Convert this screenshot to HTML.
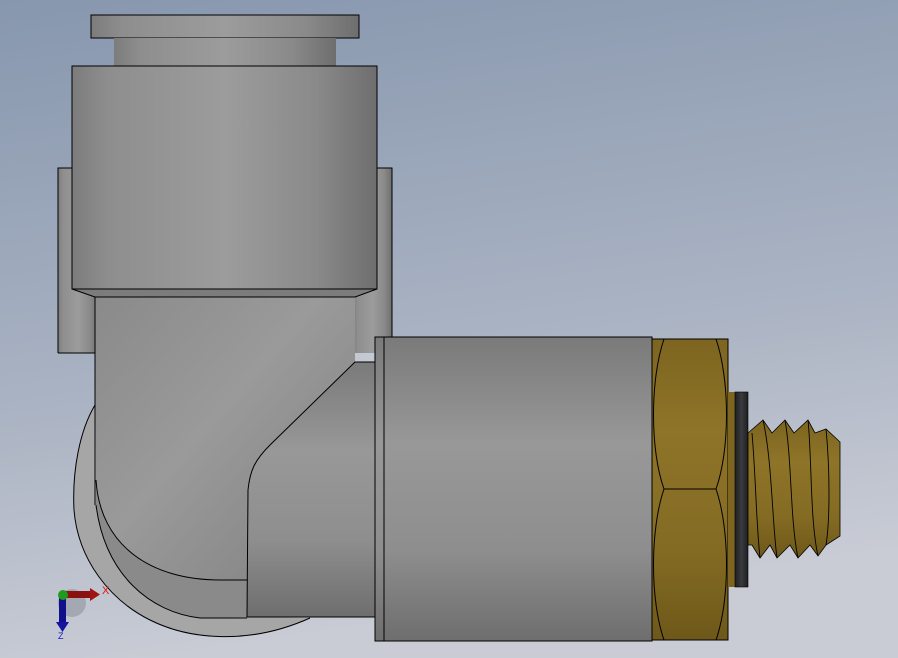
<!DOCTYPE html>
<html><head><meta charset="utf-8"><style>
html,body{margin:0;padding:0;width:898px;height:658px;overflow:hidden}
svg{display:block}
</style></head><body>
<svg width="898" height="658" viewBox="0 0 898 658" xmlns="http://www.w3.org/2000/svg">
<defs>
<linearGradient id="bg" x1="0" y1="0" x2="0.2" y2="1">
<stop offset="0" stop-color="#8797ae"/><stop offset="0.6" stop-color="#aab3c3"/><stop offset="1" stop-color="#c9ccd5"/>
</linearGradient>
<linearGradient id="cylV" x1="0" y1="0" x2="1" y2="0">
<stop offset="0" stop-color="#7c7c7c"/><stop offset="0.12" stop-color="#8e8e8e"/><stop offset="0.5" stop-color="#9c9c9c"/><stop offset="0.8" stop-color="#8a8a8a"/><stop offset="1" stop-color="#6e6e6e"/>
</linearGradient>
<linearGradient id="cylH" x1="0" y1="0" x2="0" y2="1">
<stop offset="0" stop-color="#7a7a7a"/><stop offset="0.35" stop-color="#989898"/><stop offset="0.7" stop-color="#8e8e8e"/><stop offset="1" stop-color="#6e6e6e"/>
</linearGradient>
<linearGradient id="body" x1="0" y1="0" x2="1" y2="1">
<stop offset="0" stop-color="#8a8a8a"/><stop offset="0.4" stop-color="#9a9a9a"/><stop offset="1" stop-color="#7a7a7a"/>
</linearGradient>
<linearGradient id="brass" x1="0" y1="0" x2="0" y2="1">
<stop offset="0" stop-color="#7d6520"/><stop offset="0.3" stop-color="#8e7428"/><stop offset="0.7" stop-color="#846b24"/><stop offset="1" stop-color="#6e5819"/>
</linearGradient>
<linearGradient id="blk" x1="0" y1="0" x2="1" y2="0">
<stop offset="0" stop-color="#1e1f21"/><stop offset="0.5" stop-color="#3a3b3e"/><stop offset="1" stop-color="#1e1f21"/>
</linearGradient>
</defs>
<rect width="898" height="658" fill="url(#bg)"/>

<!-- outer ring of elbow -->
<path d="M95,405 C80,430 72,470 74,510 C78,560 110,600 150,620 C190,640 250,645 310,618 L247,617 L96,500 Z" fill="#a6a6a6"/>
<path d="M95,405 C80,430 72,470 74,510 C78,560 110,600 150,620 C190,640 250,645 310,618" fill="none" stroke="#000"/>
<!-- ears -->
<rect x="58" y="168" width="40" height="185" fill="url(#cylV)"/>
<path d="M58,353 L58,168 L72,168 M95,353 L58,353" fill="none" stroke="#000"/>
<rect x="353" y="168" width="39" height="185" fill="url(#cylV)"/>
<path d="M377,168 L392,168 L392,337" fill="none" stroke="#000"/>
<rect x="355" y="353" width="23" height="9" fill="#c3c8d2"/>
<!-- main elbow body -->
<path d="M95,297 L355,297 L355,362 L375,362 L375,617 L247,617 L210,618 C150,612 100,570 96,500 Z" fill="url(#body)"/>
<path d="M96,480 C100,545 150,580 220,580 L247,580 L247,617 L200,618 C150,610 105,575 96,505 Z" fill="#8a8a8a"/>
<path d="M96,480 C100,545 150,580 220,580 L247,580" fill="none" stroke="#000"/>
<path d="M96,505 C105,575 150,612 200,618 L247,618" fill="none" stroke="#000"/>
<path d="M95,297 L95,505" stroke="#000" fill="none"/>
<!-- horizontal tube face -->
<path d="M355,362 L375,362 L375,617 L247,617 L248,490 C250,470 255,460 270,445 Z" fill="url(#cylH)" stroke="#000" stroke-width="1"/>
<!-- collar -->
<rect x="91" y="15" width="268" height="23" fill="url(#cylV)" stroke="#000"/>
<rect x="114" y="38" width="222" height="28" fill="url(#cylV)"/>
<rect x="72" y="66" width="305" height="223" fill="url(#cylV)" stroke="#000"/>
<path d="M72,289 L377,289 L355,297 L95,297 Z" fill="#7c7c7c" stroke="#000" stroke-width="1"/>
<!-- flange + big cylinder -->
<rect x="375" y="337" width="9" height="304" fill="url(#cylH)" stroke="#000"/>
<rect x="384" y="337" width="268" height="304" fill="url(#cylH)" stroke="#000"/>
<!-- hex nut -->
<rect x="652" y="339" width="76" height="301" fill="url(#brass)" stroke="#000"/>
<path d="M664,339 C650,380 650,450 664,489 C650,530 650,600 664,640" fill="none" stroke="#000"/>
<path d="M716,339 C730,380 730,450 716,489 C730,530 730,600 716,640" fill="none" stroke="#000"/>
<line x1="664" y1="489" x2="716" y2="489" stroke="#000"/>
<!-- washer -->
<rect x="728" y="392" width="8" height="195" fill="#7d6520"/>
<rect x="735" y="392" width="13" height="195" fill="url(#blk)" stroke="#000" stroke-width="0.6"/>
<!-- thread -->
<path d="M748,433 L763,420 L772,433 L785,420 L794,433 L808,420 L815,433 L826,429 L840,442 L840,536 L826,545 L818,556 L810,545 L798,558 L790,545 L777,558 L770,545 L760,558 L752,545 L748,545 Z" fill="url(#brass)" stroke="#000" stroke-width="0.8"/>
<path d="M763,420 C772,460 772,520 777,558 M785,420 C792,460 790,520 798,558 M808,420 C812,460 810,520 818,556 M826,429 C830,470 830,520 826,545 M752,433 C756,480 756,520 760,558" fill="none" stroke="#000" stroke-width="0.9"/>
<!-- triad -->
<circle cx="72" cy="603" r="14" fill="#8f949c" opacity="0.6"/>
<rect x="66" y="591" width="26" height="7" fill="#8b1010"/>
<path d="M90,588 L100,594.5 L90,601 Z" fill="#a01414"/>
<text x="102" y="594" font-family="Liberation Sans, sans-serif" font-size="11" fill="#e01010">X</text>
<rect x="59" y="596" width="7" height="28" fill="#10108a"/>
<path d="M56,622 L62.5,632 L69,622 Z" fill="#1414a0"/>
<text x="58" y="639" font-family="Liberation Sans, sans-serif" font-size="9" fill="#1818c0">Z</text>
<circle cx="63" cy="595" r="5" fill="#1e9a1e"/>
</svg>
</body></html>
